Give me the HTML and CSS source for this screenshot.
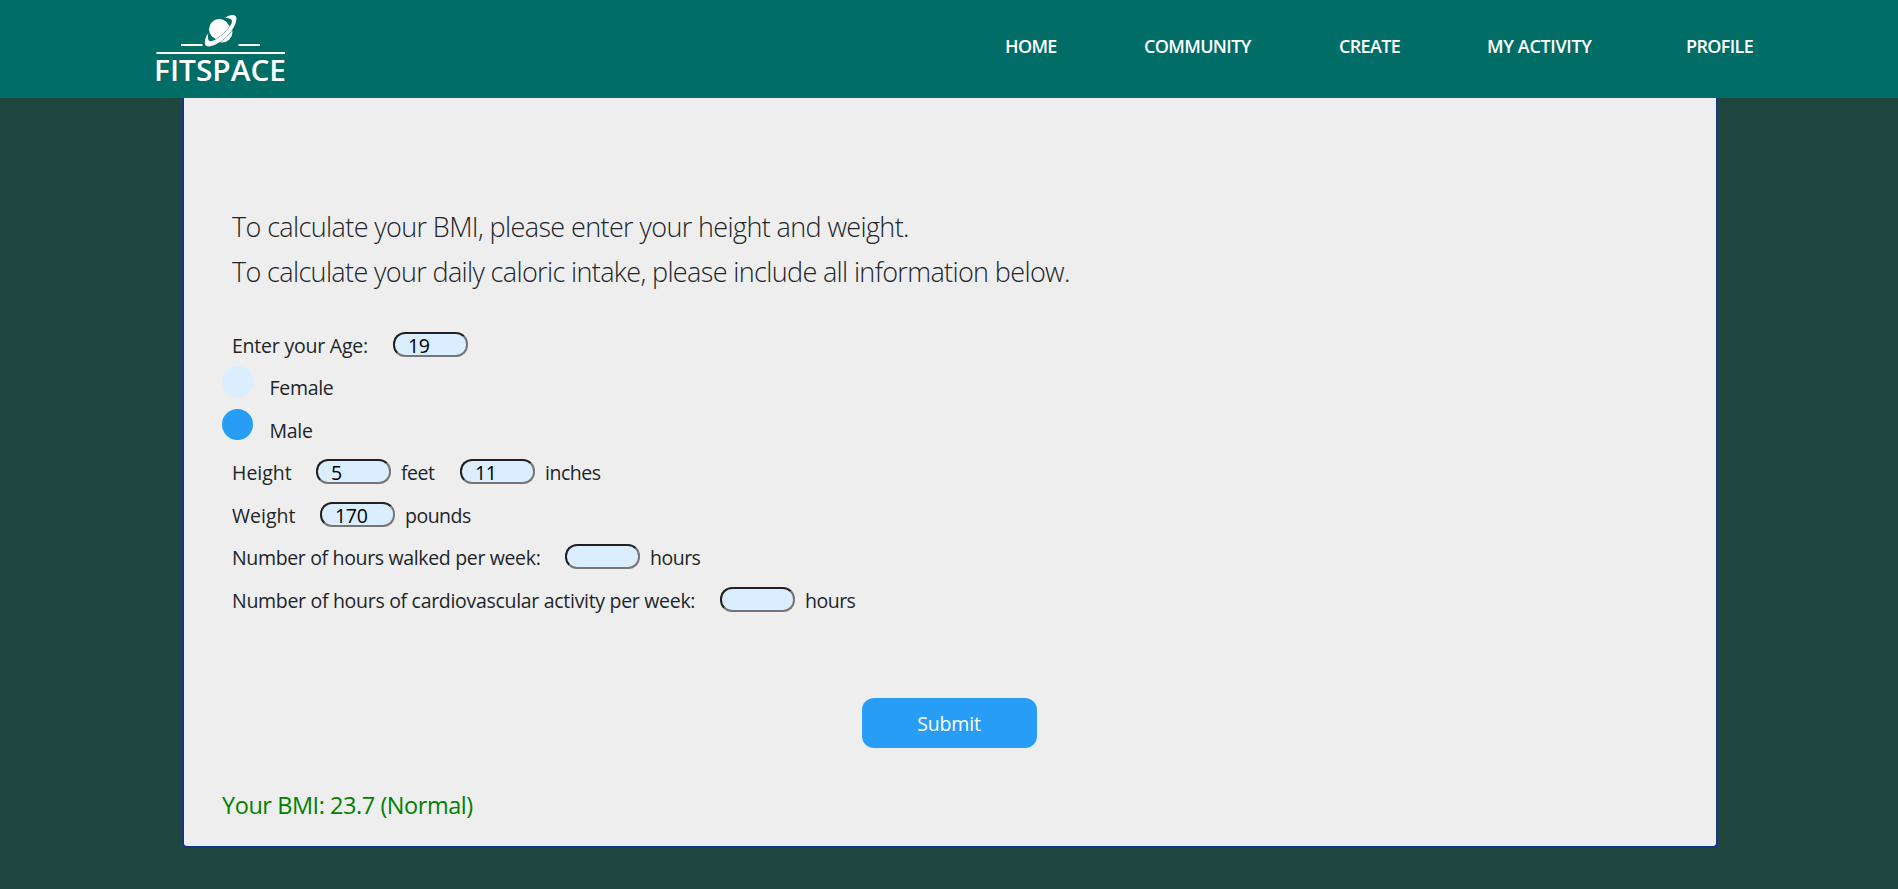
FILE: index.html
```html
<!DOCTYPE html>
<html lang="en">
<head>
<meta charset="utf-8">
<title>FitSpace</title>
<link rel="stylesheet" href="styles.css">
</head>
<body>
<header class="header">
  <svg class="logo" width="130" height="70" viewBox="155 13 130 70">
    <g fill="#fff">
      <circle cx="222" cy="32" r="10.500"/>
      <path d="M230 20C233 27 220 41 208 42L208 36L225 18Z" fill="#006d66"/>
      <circle cx="219.300" cy="29.200" r="10.300"/>
      <path d="M225 18C229 14.600 234.800 13.600 236.200 17C238 24 228 38.500 216 44.300C210 47.400 205.200 47.400 204.800 43C204.600 40 206 36 208.300 33.500C207.600 38 208 41.600 211 41.200C217.500 40 228 31 231.500 23.500C233.200 19.500 230.500 18 225 18Z" stroke="#006d66" stroke-width=".9" paint-order="stroke"/>
      <rect x="181" y="44" width="21.500" height="2"/>
      <rect x="238.500" y="44" width="21.500" height="2"/>
      <rect x="156.500" y="52" width="128.500" height="2"/>
      <text class="logo-text" x="154" y="81.300" textLength="132" lengthAdjust="spacingAndGlyphs">FITSPACE</text>
    </g>
  </svg>
  <nav class="nav">
    <a class="nav-home">HOME</a>
    <a class="nav-community">COMMUNITY</a>
    <a class="nav-create">CREATE</a>
    <a class="nav-activity">MY ACTIVITY</a>
    <a class="nav-profile">PROFILE</a>
  </nav>
</header>
<main class="card">
  <div class="intro">
    <p class="intro-bmi">To calculate your BMI, please enter your height and weight.</p>
    <p class="intro-calories">To calculate your daily caloric intake, please include all information below.</p>
  </div>
  <form class="form">
    <div class="row"><label class="label label-age">Enter your Age:</label><input class="field" value="19"></div>
    <div class="row row-radio"><span class="radio"></span><label class="female">Female</label></div>
    <div class="row row-radio"><span class="radio radio-checked"></span><label class="male">Male</label></div>
    <div class="row"><label class="label label-height">Height</label><input class="field" value="5"><span class="unit unit-feet">feet</span><input class="field" value="11"><span class="unit">inches</span></div>
    <div class="row"><label class="label label-weight">Weight</label><input class="field" value="170"><span class="unit unit-pounds">pounds</span></div>
    <div class="row"><label class="label label-walk">Number of hours walked per week:</label><input class="field"><span class="unit">hours</span></div>
    <div class="row"><label class="label label-cardio">Number of hours of cardiovascular activity per week:</label><input class="field"><span class="unit">hours</span></div>
    <button class="submit" type="button">Submit</button>
  </form>
  <p class="result">Your BMI: 23.7 (Normal)</p>
</main>
</body>
</html>
```
FILE: styles.css
```css
* { box-sizing: border-box; }
body {
  margin: 0;
  height: 889px;
  overflow: hidden;
  background: #1f463f;
  color: #212529;
  font-family: "Open Sans", "Noto Sans", sans-serif;
  font-size: 20px;
}
p { margin: 0; white-space: nowrap; }
.header {
  display: flex;
  height: 98px;
  padding: 13px 0 0 155px;
  background: #006d66;
}
.logo { flex: none; overflow: visible; }
.logo-text { font: 600 29.500px "Open Sans", sans-serif; }
.nav {
  display: flex;
  margin-left: 720px;
  padding-top: 20px;
  color: #fff;
  font-size: 18px;
  font-weight: 600;
  line-height: 27px;
  white-space: nowrap;
  letter-spacing: -0.65px;
}
.nav-home { width: 139px; }
.nav-community { width: 195px; }
.nav-create { width: 148px; }
.nav-activity { width: 199px; letter-spacing: -0.35px; }
.card {
  width: 1536px;
  height: 750px;
  margin-left: 182px;
  padding: 106px 38px 0;
  border: 2px solid #14338c;
  border-top: 0;
  border-radius: 0 0 5px 5px;
  background: #eee;
}
.intro {
  padding-left: 10px;
  font-size: 27px;
  font-weight: 300;
  line-height: 45px;
}
.intro-bmi { letter-spacing: -0.62px; }
.intro-calories { letter-spacing: -0.64px; }
.form { display: flex; flex-direction: column; margin-top: 30.500px; }
.row {
  display: flex;
  align-items: center;
  height: 42.500px;
  padding-left: 10px;
  line-height: 30px;
  white-space: nowrap;
  font-size: 19.500px;
  letter-spacing: -0.3px;
}
.field {
  width: 75px;
  height: 25px;
  margin: 0 0 3px;
  padding: 2px 0 0 13px;
  border: 2px solid;
  border-color: #212121 #767676 #767676 #212121;
  border-radius: 12px;
  background: #dbeeff;
  color: #000;
  font: 19.500px "Open Sans", sans-serif;
  letter-spacing: -0.3px;
}
.label { flex: none; }
.label-age { width: 161px; letter-spacing: -0.22px; }
.label-height { width: 84px; letter-spacing: 0; }
.label-weight { width: 88px; letter-spacing: 0; }
.label-walk { width: 333px; letter-spacing: -0.34px; }
.label-cardio { width: 488px; }
.unit { margin-left: 10px; letter-spacing: -0.5px; }
.unit-feet { width: 59px; }
.row-radio { padding-left: 0; }
.radio {
  width: 31px;
  height: 31px;
  margin: 0 16.500px 13px 0;
  border-radius: 50%;
  background: #dbeeff;
}
.radio-checked { background: #289df6; }
.submit {
  align-self: center;
  width: 175px;
  height: 50px;
  margin: 75.500px 2px 0 0;
  padding: 2px 0 0;
  border: 0;
  border-radius: 12px;
  background: #289df6;
  color: #fff;
  font: 19.500px "Open Sans", sans-serif;
  letter-spacing: -0.2px;
}
.result {
  margin-top: 39px;
  color: #008000;
  font-size: 23.500px;
  line-height: 36px;
  letter-spacing: -0.45px;
}
```
